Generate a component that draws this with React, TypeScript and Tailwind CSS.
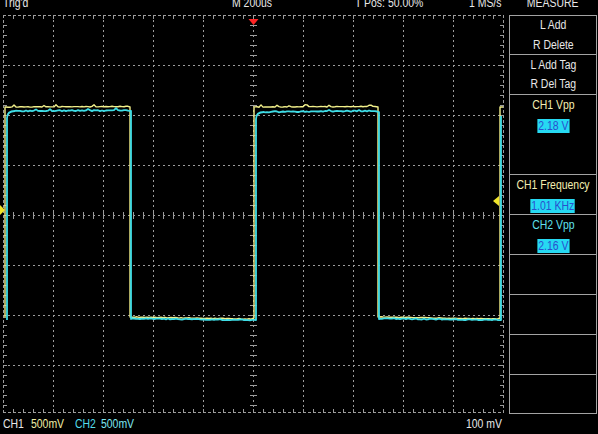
import React from 'react';

const GRID = '#9c9c9c';

// small deterministic noise so the traces look sampled
function rng(seed: number) {
  let s = seed >>> 0;
  return () => {
    s = (Math.imul(s, 1664525) + 1013904223) >>> 0;
    return s / 4294967296;
  };
}

function seg(x0: number, x1: number, y0: number, y1: number, amp: number, spikes: number, seed: number) {
  const r = rng(seed);
  const out: string[] = [];
  for (let x = x0; x <= x1; x += 2) {
    const t = (x - x0) / (x1 - x0);
    const spike = r() < spikes ? -1 - r() * 1.2 : 0;
    const y = y0 + (y1 - y0) * t + (r() - 0.5) * amp + spike;
    out.push(`L${x},${y.toFixed(1)}`);
  }
  return out.join(' ');
}

const yellowPath = [
  'M5,318 L5,107',
  seg(6, 128, 107, 106.5, 0.6, 0.1, 3),
  'L130,107 L130,317',
  seg(131, 252, 317, 319, 0.6, 0, 7),
  'L254,318 L254,107',
  seg(255, 376, 107, 106.5, 0.6, 0.1, 11),
  'L378,107 L378,317',
  seg(379, 498, 317, 319, 0.6, 0, 13),
  'L500,318 L500,107 L503,107',
].join(' ');

const cyanPath = [
  'M7,320 L7,118 Q7,111 15,111',
  seg(16, 129, 111, 110.5, 1.2, 0.06, 21),
  'L131,111 L131,319',
  seg(132, 254, 318.5, 320, 1, 0, 23),
  'L256,320 L256,119 Q256,112 264,112',
  seg(265, 377, 112, 111, 1.2, 0.06, 27),
  'L379,112 L379,319',
  seg(380, 499, 318.5, 320, 1, 0, 29),
  'L501,320 L501,116',
].join(' ');

function Graticule() {
  const vx = [53, 103, 153, 203, 253, 303, 353, 403, 453];
  const hy = [65, 115, 165, 215, 265, 315, 365];
  const ticksX: number[] = [];
  for (let x = 13; x < 503; x += 10) ticksX.push(x);
  const ticksY: number[] = [];
  for (let y = 25; y < 412; y += 10) ticksY.push(y);

  return (
    <svg width={506} height={399} viewBox="0 15 506 399" className="block shrink-0">
      <g stroke={GRID} strokeWidth={1} shapeRendering="crispEdges" fill="none">
        {vx.map((x) => (
          <line key={`v${x}`} x1={x + 0.5} y1={15} x2={x + 0.5} y2={413} strokeDasharray="2 3" />
        ))}
        {hy.map((y) => (
          <line key={`h${y}`} x1={3} y1={y + 0.5} x2={504} y2={y + 0.5} strokeDasharray="2 3" />
        ))}
        <line x1={3.5} y1={15} x2={3.5} y2={413} strokeDasharray="3 2" />
        <line x1={503.5} y1={15} x2={503.5} y2={413} strokeDasharray="3 2" />
        <line x1={3} y1={15.5} x2={504} y2={15.5} strokeDasharray="3 2" />
        <line x1={3} y1={412.5} x2={504} y2={412.5} strokeDasharray="3 2" />
        {ticksY.map((y) => (
          <g key={`ty${y}`}>
            <line x1={3} y1={y + 0.5} x2={7} y2={y + 0.5} />
            <line x1={500} y1={y + 0.5} x2={504} y2={y + 0.5} />
            <line x1={250} y1={y + 0.5} x2={257} y2={y + 0.5} />
          </g>
        ))}
        {ticksX.map((x) => (
          <g key={`tx${x}`}>
            <line x1={x + 0.5} y1={15} x2={x + 0.5} y2={19} />
            <line x1={x + 0.5} y1={409} x2={x + 0.5} y2={413} />
            <line x1={x + 0.5} y1={212} x2={x + 0.5} y2={219} />
          </g>
        ))}
      </g>

      <path d={yellowPath} fill="none" stroke="#f2f08a" strokeWidth={1.4} strokeLinejoin="round" />
      <path d={cyanPath} fill="none" stroke="#3fdde6" strokeWidth={1.8} strokeLinejoin="round" />

      {/* trigger position */}
      <polygon points="248.5,19 258.5,19 253.5,25" fill="#ff2424" />
      {/* trigger level markers */}
      <polygon points="0,205 5,210 0,215" fill="#f0e42a" />
      <polygon points="499,196 493,201 499,206" fill="#f0e42a" />
    </svg>
  );
}

// the scope font is a condensed sans, squeeze Arial metrics to match
function T({ children, left = false, className = '' }: { children: React.ReactNode; left?: boolean; className?: string }) {
  return (
    <span className={`inline-block scale-x-[0.87] ${left ? 'origin-left' : 'origin-center'} ${className}`}>
      {children}
    </span>
  );
}

function Value({ children }: { children: React.ReactNode }) {
  return (
    <div className="mt-[1px]">
      <T className="h-[14px] px-[1px] leading-[14px] bg-[#26d9f2] text-[#2a4fcf]">{children}</T>
    </div>
  );
}

export default function App() {
  return (
    <div className="w-[598px] h-[434px] bg-black overflow-hidden flex flex-col font-['Liberation_Sans',Arial,sans-serif] text-[12px] text-[#e8e8e8]">
      {/* status line, clipped at the top like on the scope */}
      <div className="h-[15px] overflow-hidden flex leading-[12px] whitespace-nowrap">
        <span className="w-[232px] shrink-0 pl-[3px] -mt-[3px]"><T left>Trig'd</T></span>
        <span className="w-[123px] shrink-0 -mt-[3px]"><T left>M 200us</T></span>
        <span className="w-[114px] shrink-0 -mt-[3px]"><T left>T Pos: 50.00%</T></span>
        <span className="w-[40px] shrink-0 -mt-[3px]"><T left>1 MS/s</T></span>
        <span className="w-[88px] shrink-0 -mt-[3px] text-center"><T>MEASURE</T></span>
      </div>

      <div className="h-[399px] flex">
        <Graticule />
        <div className="ml-[3px] w-[88px] h-full border border-[#a3a3a3] flex flex-col text-center leading-[20px] whitespace-nowrap">
          <div className="h-[39px] border-b border-[#a3a3a3]">
            <div className="-mt-[1px]"><T>L Add</T></div>
            <div><T>R Delete</T></div>
          </div>
          <div className="h-[40px] border-b border-[#a3a3a3]">
            <div><T>L Add Tag</T></div>
            <div className="-mt-[1px]"><T>R Del Tag</T></div>
          </div>
          <div className="h-[80px] border-b border-[#a3a3a3]">
            <div className="text-[#f3eeb0]"><T>CH1 Vpp</T></div>
            <Value>2.18 V</Value>
          </div>
          <div className="h-[40px] border-b border-[#a3a3a3]">
            <div className="text-[#f3eeb0]"><T>CH1 Frequency</T></div>
            <Value>1.01 KHz</Value>
          </div>
          <div className="h-[40px] border-b border-[#a3a3a3]">
            <div className="text-[#5fe0ee]"><T>CH2 Vpp</T></div>
            <Value>2.16 V</Value>
          </div>
          <div className="h-[40px] border-b border-[#a3a3a3]" />
          <div className="h-[40px] border-b border-[#a3a3a3]" />
          <div className="h-[40px] border-b border-[#a3a3a3]" />
          <div className="flex-1" />
        </div>
      </div>

      <div className="flex-1 flex leading-[20px] whitespace-nowrap">
        <span className="w-[31px] shrink-0 pl-[3px]"><T left>CH1</T></span>
        <span className="w-[44px] shrink-0 text-[#f0eea6]"><T left>500mV</T></span>
        <span className="w-[26px] shrink-0 text-[#55dcec]"><T left>CH2</T></span>
        <span className="w-[365px] shrink-0 text-[#7fe6f0]"><T left>500mV</T></span>
        <span className="shrink-0"><T left>100 mV</T></span>
      </div>
    </div>
  );
}
